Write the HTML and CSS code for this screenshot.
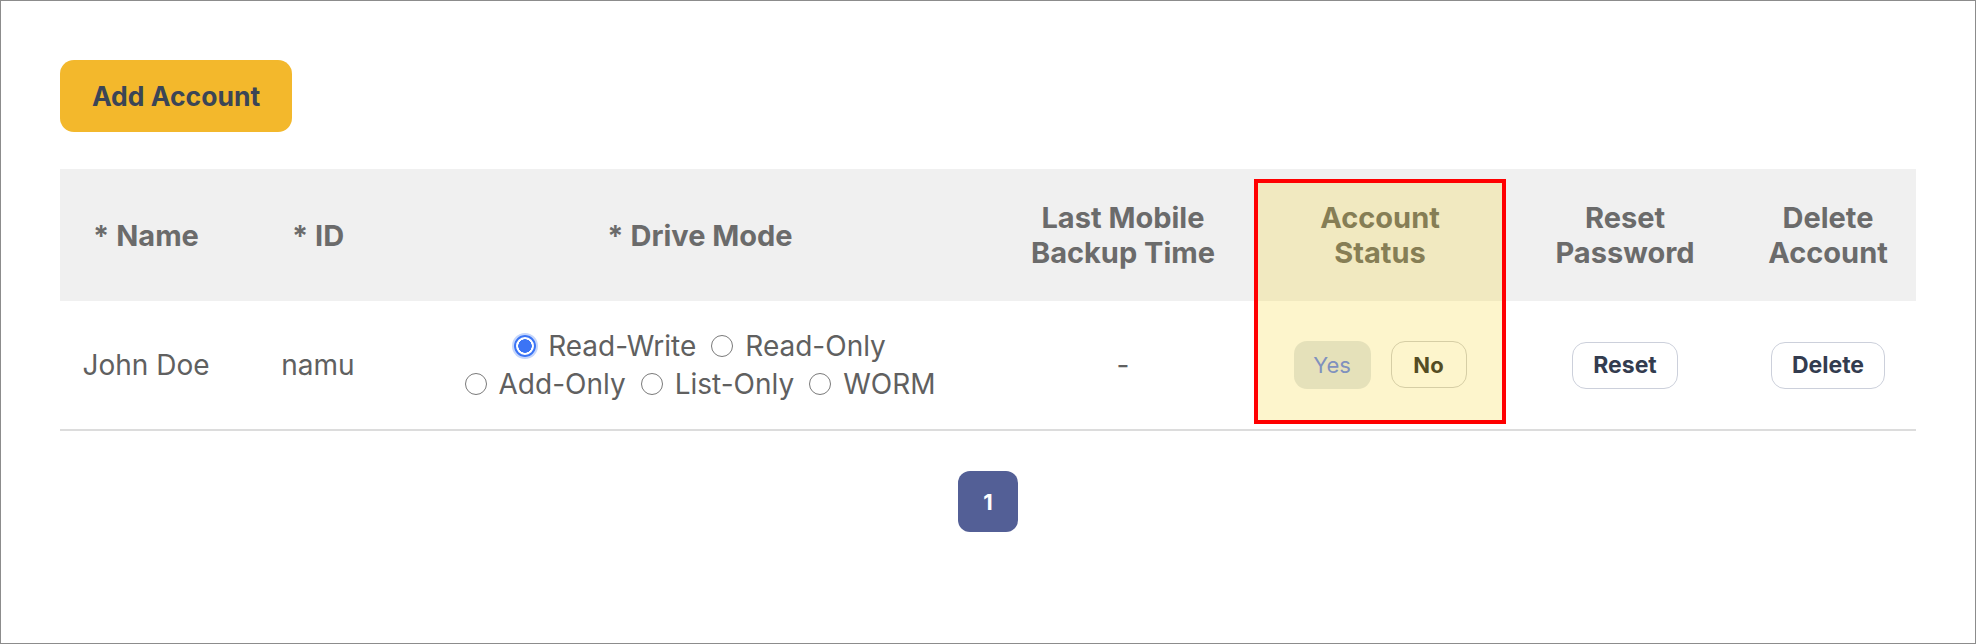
FILE: index.html
```html
<!DOCTYPE html>
<html lang="en">
<head>
  <meta charset="UTF-8" />
  <meta name="viewport" content="width=device-width, initial-scale=1.0"/>
  <title>Accounts</title>
  <link rel="stylesheet" href="styles.css">
</head>
<body>
  <div class="page">
    <button class="btn-add">Add Account</button>

    <div class="table-wrap">
      <table class="accounts">
        <colgroup>
          <col class="c-name">
          <col class="c-id">
          <col class="c-mode">
          <col class="c-backup">
          <col class="c-status">
          <col class="c-reset">
          <col class="c-delete">
        </colgroup>
        <thead>
          <tr>
            <th>* Name</th>
            <th>* ID</th>
            <th>* Drive Mode</th>
            <th>Last Mobile<br>Backup Time</th>
            <th>Account<br>Status</th>
            <th>Reset<br>Password</th>
            <th>Delete<br>Account</th>
          </tr>
        </thead>
        <tbody>
          <tr>
            <td>John Doe</td>
            <td>namu</td>
            <td>
              <div class="modes">
                <div class="mode-line">
                  <label class="mode"><input type="radio" name="mode" checked> Read-Write</label>
                  <label class="mode"><input type="radio" name="mode"> Read-Only</label>
                </div>
                <div class="mode-line">
                  <label class="mode"><input type="radio" name="mode"> Add-Only</label>
                  <label class="mode"><input type="radio" name="mode"> List-Only</label>
                  <label class="mode"><input type="radio" name="mode"> WORM</label>
                </div>
              </div>
            </td>
            <td>-</td>
            <td>
              <div class="status">
                <button class="btn-yes">Yes</button>
                <button class="btn-line">No</button>
              </div>
            </td>
            <td><button class="btn-line">Reset</button></td>
            <td><button class="btn-line">Delete</button></td>
          </tr>
        </tbody>
      </table>
      <div class="highlight"></div>
    </div>

    <div class="pager">
      <button class="page-btn">1</button>
    </div>
  </div>
</body>
</html>
```

FILE: styles.css
```css
* {margin: 0; padding: 0; box-sizing: border-box; font-family: 'Inter', 'Liberation Sans', sans-serif;}
body {
  background: #ffffff;
}
.page {
  height: 644px;
  border: 1px solid #8c8c8c;
  padding: 59px 59px 0 59px;
}
.btn-add {
  display: block;
  width: 232px;
  height: 72px;
  border: none;
  border-radius: 14px;
  background-color: #f3b82c;
  color: #3b4556;
  font-size: 26.5px;
  font-weight: 700;
}
.table-wrap {
  position: relative;
  margin-top: 37px;
}
.accounts {
  width: 100%;
  table-layout: fixed;
  border-collapse: collapse;
}
.c-name { width: 172px; }
.c-id { width: 172px; }
.c-mode { width: 592px; }
.c-backup { width: 254px; }
.c-status { width: 260px; }
.c-reset { width: 230px; }
.c-delete { width: 176px; }
.accounts th {
  height: 132px;
  padding: 0 6px;
  background-color: #f0f0f0;
  color: #6b6b6b;
  font-size: 29px;
  font-weight: 700;
  line-height: 35px;
  text-align: center;
}
.accounts td {
  height: 129px;
  padding: 0 6px;
  border-bottom: 2px solid #dcdcdc;
  color: #606060;
  font-size: 28px;
  text-align: center;
}
.modes {
  display: flex;
  flex-direction: column;
  align-items: center;
  line-height: 38px;
}
.mode-line {
  display: flex;
  gap: 15px;
}
.mode {
  display: flex;
  align-items: center;
  white-space: nowrap;
}
.mode input {
  appearance: none;
  width: 22px;
  height: 22px;
  margin-right: 12px;
  border: 1.5px solid #7a7a7a;
  border-radius: 50%;
  background: #ffffff;
}
.mode input:checked {
  border: 2px solid #3b74f5;
  background: radial-gradient(circle, #3b74f5 0 6.5px, #ffffff 7px);
  box-shadow: 0 0 0 2px #c5d6fb;
}
.status {
  display: flex;
  justify-content: center;
  gap: 20px;
}
.btn-yes {
  width: 77px;
  height: 48px;
  border: none;
  border-radius: 13px;
  background-color: #e2e7e9;
  color: #6383ee;
  font-size: 22px;
}
.btn-line {
  height: 47px;
  padding: 0 20px;
  border: 1.5px solid #ccd0db;
  border-radius: 14px;
  background-color: #ffffff;
  color: #333c4f;
  font-size: 23px;
  font-weight: 700;
}
.status .btn-line {
  width: 76px;
  padding: 0;
  border-color: #cfcfcf;
  background-color: transparent;
  color: #2c2c2c;
  font-size: 22px;
}
.highlight {
  position: absolute;
  left: 1194px;
  top: 10px;
  width: 252px;
  height: 245px;
  border: 4px solid #ff0000;
  background-color: rgba(245, 205, 0, 0.2);
  pointer-events: none;
}
.pager {
  display: flex;
  justify-content: center;
  margin-top: 40px;
}
.page-btn {
  width: 60px;
  height: 61px;
  border: none;
  border-radius: 12px;
  background-color: #535f96;
  color: #ffffff;
  font-size: 22px;
  font-weight: 700;
}
```
